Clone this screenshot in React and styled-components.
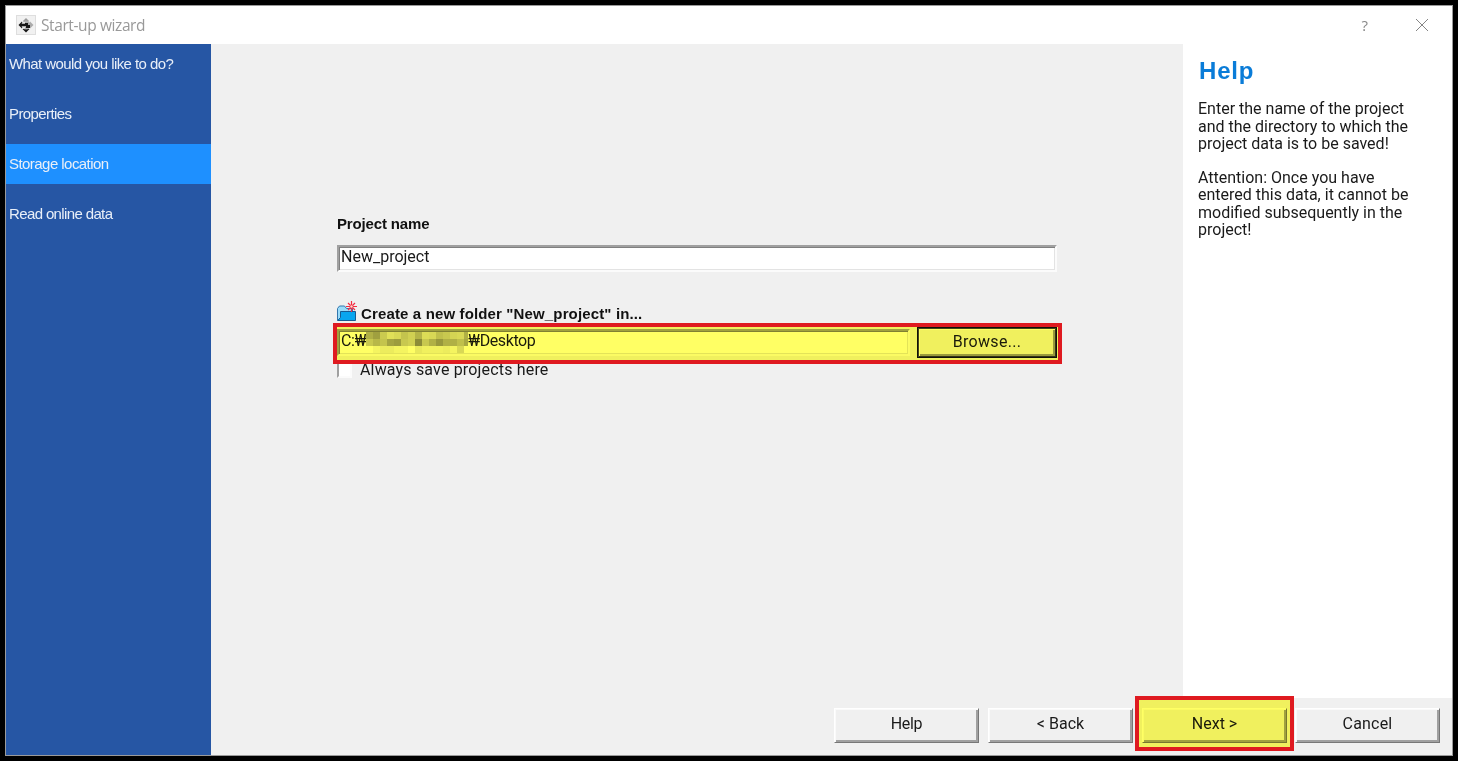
import styled, { createGlobalStyle } from "styled-components";

const GlobalStyle = createGlobalStyle`
  * {
    box-sizing: border-box;
  }

  body {
    margin: 0;
    background: #000;
    overflow: hidden;
  }
`;

const Screen = styled.div`
  height: 761px;
  padding: 5px;
  background: #000;
`;

const Window = styled.div`
  display: flex;
  flex-direction: column;
  width: 1448px;
  height: 751px;
  border: 1px solid #9a9a9a;
  background: #f0f0f0;
  color: #1a1a1a;
  font-family: Roboto, "Liberation Sans", "Noto Sans CJK KR", sans-serif;
  font-size: 16px;
`;

const TitleBar = styled.div`
  display: flex;
  align-items: center;
  height: 38px;
  padding: 0 23px 0 10px;
  background: #fff;

  .window-buttons {
    display: flex;
    align-items: center;
    gap: 47px;
    margin-left: auto;
  }
`;

const Label = styled.span`
  font-size: ${(props) => props.size || "inherit"};
  font-weight: ${(props) => props.weight || 400};
  font-family: ${(props) => props.font || "inherit"};
  letter-spacing: ${(props) => props.spacing || "0"};
  color: ${(props) => props.color || "inherit"};
  line-height: 18px;
  white-space: pre;
`;

const BoldLabel = styled(Label)`
  color: #111;
  font-family: "Liberation Sans", Arial, sans-serif;
  font-size: 15px;
  font-weight: 700;
`;

const Body = styled.div`
  display: flex;
  flex: 1;
`;

const Sidebar = styled.div`
  display: flex;
  flex-direction: column;
  gap: 10px;
  width: 205px;
  background: #2656a4;
`;

const Step = styled.div`
  height: 40px;
  padding-left: 3px;
  background: ${(props) => (props.active ? "#1e90ff" : "transparent")};
  color: #e9eff8;
  font-family: "Liberation Sans", Arial, sans-serif;
  font-size: 15px;
  line-height: 40px;
  letter-spacing: ${(props) => props.spacing};
`;

const Content = styled.div`
  display: flex;
  flex-direction: column;
  flex: 1;
`;

const Panels = styled.div`
  display: flex;
  height: 654px;
`;

const Main = styled.div`
  width: 972px;
  padding: 171px 126px 0;
`;

const NameCaption = styled.div`
  display: flex;
  height: 30px;
`;

const HelpPanel = styled.div`
  flex: 1;
  padding: 13px 0 0 15px;
  background: #fff;
`;

const HelpTitle = styled.h1`
  margin: 0 0 15px 1px;
  color: #0a7cd8;
  font-family: "Liberation Sans", Arial, sans-serif;
  font-size: 24px;
  font-weight: 700;
  line-height: 28px;
  letter-spacing: 0.8px;
`;

const HelpText = styled.p`
  display: flex;
  flex-direction: column;
  margin: 0 0 16px;

  ${Label} {
    line-height: 17.5px;
  }
`;

const Field = styled.div`
  display: flex;
  width: ${(props) => props.width};
  height: 27px;
  padding: 1px 2px 0;
  border: 2px solid;
  border-color: #a0a0a0 #fbfbfb #fbfbfb #a0a0a0;
  background: #fff;
  box-shadow: inset 1px 1px 0 #808080, inset -1px -1px 0 #e3e3e3;
`;

const FolderHeading = styled.div`
  display: flex;
  align-items: flex-end;
  gap: 4px;
  height: 23px;
  margin-top: 27px;

  ${BoldLabel} {
    margin-bottom: -1px;
  }
`;

const PathRow = styled.div`
  position: relative;
  display: flex;
  justify-content: space-between;
  align-items: center;
  height: 31px;
  margin-top: 5px;
`;

const Mosaic = styled.div`
  display: grid;
  grid-template-columns: repeat(14, 7px) 4px;
  grid-auto-rows: 7px;
  width: 102px;
`;

const Tile = styled.i`
  background: ${(props) => props.shade};
`;

const CheckRow = styled.div`
  display: flex;
  align-items: flex-start;
  gap: 8px;
  margin-top: 3px;
`;

const CheckBox = styled.span`
  width: 15px;
  height: 17px;
  border: 2px solid;
  border-color: #a0a0a0 #fbfbfb #fbfbfb #a0a0a0;
  background: #fff;
`;

const Button = styled.button`
  width: ${(props) => props.width || "145px"};
  height: ${(props) => props.height || "35px"};
  padding: 0 0 3px;
  border: 1px solid;
  border-color: #fff #777 #777 #fff;
  border-radius: 0;
  background: #f0f0f0;
  box-shadow: inset 1px 1px 0 #fafafa, inset -2px -2px 0 #a0a0a0;
  color: inherit;
  font: inherit;
  line-height: 18px;
`;

const BrowseButton = styled(Button)`
  padding: 0 0 1px;
  border: 1px solid #111;
  box-shadow: inset 1px 1px 0 #444, inset -1px -1px 0 #333, inset 2px 2px 0 #fff,
    inset -3px -3px 0 #999;
`;

const Footer = styled.div`
  display: flex;
  justify-content: flex-end;
  gap: 9px;
  padding: 10px 12px 0 0;
`;

const NextSlot = styled.div`
  position: relative;
  margin-right: -1px;
`;

// Marker pen: red frame with a yellow tint over what it covers
const Highlight = styled.div`
  position: absolute;
  z-index: 1;
  inset: ${(props) => props.inset};
  border: 4px solid #df1a20;
  pointer-events: none;
`;

const Tint = styled.div`
  position: absolute;
  z-index: 1;
  inset: ${(props) => props.inset};
  background: #ffff64;
  mix-blend-mode: multiply;
  pointer-events: none;
`;

const steps = [
  { name: "What would you like to do?", spacing: "-0.58px" },
  { name: "Properties", spacing: "-0.6px" },
  { name: "Storage location", active: true, spacing: "-0.55px" },
  { name: "Read online data", spacing: "-0.63px" },
];

const helpTexts = [
  [
    "Enter the name of the project",
    "and the directory to which the",
    "project data is to be saved!",
  ],
  [
    "Attention: Once you have",
    "entered this data, it cannot be",
    "modified subsequently in the",
    "project!",
  ],
];

const tiles = [
  "#b0b0b0", "#a0a0a0", "#cacaca", "#e0e0e0", "#d8d8d8", "#c4c4c4", "#d0d0d0", "#b4b4b4", "#dcdcdc", "#d8d8d8", "#c0c0c0", "#c8c8c8", "#d4d4d4", "#d8d8d8", "#b0b0b0",
  "#c8c8c8", "#b8b8b8", "#c4c4c4", "#a4a4a4", "#9c9c9c", "#c8c8c8", "#d0d0d0", "#8c8c8c", "#c8c8c8", "#b0b0b0", "#989898", "#b0b0b0", "#b0b0b0", "#c0c0c0", "#a8a8a8",
  "#fff", "#f4f4f4", "#ececec", "#ececec", "#f4f4f4", "#f4f4f4", "#fff", "#e8e8e8", "#f0f0f0", "#f0f0f0", "#f0f0f0", "#ececec", "#f4f4f4", "#d8d8d8", "#fff",
];

const AppIconSvg = styled.svg`
  margin-right: 5px;
`;

const AppIcon = () => (
  <AppIconSvg width="20" height="20" viewBox="0 0 20 20">
    <rect x="0.5" y="0.5" width="19" height="19" fill="#f1f1f1" stroke="#dedede" />
    <path d="M10 3 13 6H7z" fill="#999" />
    <path d="M17.5 10 14 13.5v-7z" fill="#aaa" />
    <path d="M2.5 10 6 6.5v7z" fill="#161616" />
    <path d="M10 17.5 6.5 14h7z" fill="#161616" />
    <circle cx="10" cy="10" r="4.5" fill="#b0b0b0" />
    <path d="M5 9h4V8h3v2h2v3h-4v-2H5z" fill="#171717" />
    <path d="M7 7h2v1H7zM7 12h2v1.5H7z" fill="#e5e5e5" />
  </AppIconSvg>
);

const FolderIcon = () => (
  <svg width="20" height="21" viewBox="0 0 20 21">
    <path d="M0.5 19.5V7.5L2.5 5h5l2 2.5h6v3" fill="#9bdcfa" stroke="#3276ad" />
    <path d="M3.5 10.5h15v9H0.7l2.8-3z" fill="#08a5ee" stroke="#185a91" />
    <path d="M14.5 0v11M9 5.5h11M11 2l7 7M18 2l-7 7" stroke="#f32c42" strokeWidth="1.2" />
    <circle cx="14.5" cy="5.5" r="1.2" fill="#ffd9cc" />
  </svg>
);

const App = () => {
  return (
    <>
      <GlobalStyle />
      <Screen>
        <Window>
          <TitleBar>
            <AppIcon />
            <Label size="15.5px" color="#999" font='"Open Sans", sans-serif' spacing="-0.4px">
              Start-up wizard
            </Label>
            <div className="window-buttons">
              <Label size="15px" color="#888" font='"Open Sans", sans-serif'>?</Label>
              <svg width="14" height="14" viewBox="0 0 14 14">
                <path d="M1 1l12 12M13 1 1 13" stroke="#858585" />
              </svg>
            </div>
          </TitleBar>
          <Body>
            <Sidebar>
              {steps.map((step, key) => (
                <Step key={key} active={step.active} spacing={step.spacing}>
                  {step.name}
                </Step>
              ))}
            </Sidebar>
            <Content>
              <Panels>
                <Main>
                  <NameCaption>
                    <BoldLabel spacing="-0.15px">Project name</BoldLabel>
                  </NameCaption>
                  <Field width="720px">
                    <Label>New_project</Label>
                  </Field>
                  <FolderHeading>
                    <FolderIcon />
                    <BoldLabel spacing="0.14px">
                      Create a new folder "New_project" in...
                    </BoldLabel>
                  </FolderHeading>
                  <PathRow>
                    <Field width="573px">
                      <Label spacing="-0.3px">C:₩</Label>
                      <Mosaic>
                        {tiles.map((shade, key) => (
                          <Tile key={key} shade={shade} />
                        ))}
                      </Mosaic>
                      <Label spacing="-0.4px">₩Desktop</Label>
                    </Field>
                    <BrowseButton width="140px" height="31px">
                      <Label spacing="0.3px">Browse...</Label>
                    </BrowseButton>
                    <Tint inset="0 -1px -2px 0" />
                    <Highlight inset="-4px -5px -6px -4px" />
                  </PathRow>
                  <CheckRow>
                    <CheckBox />
                    <Label spacing="0.17px">Always save projects here</Label>
                  </CheckRow>
                </Main>
                <HelpPanel>
                  <HelpTitle>Help</HelpTitle>
                  {helpTexts.map((lines, key) => (
                    <HelpText key={key}>
                      {lines.map((line) => (
                        <Label key={line}>{line}</Label>
                      ))}
                    </HelpText>
                  ))}
                </HelpPanel>
              </Panels>
              <Footer>
                <Button><Label spacing="-0.3px">Help</Label></Button>
                <Button><Label>&lt; Back</Label></Button>
                <NextSlot>
                  <Button><Label>Next &gt;</Label></Button>
                  <Tint inset="-8px -3px -4px -3px" />
                  <Highlight inset="-12px -7px -8px -7px" />
                </NextSlot>
                <Button><Label spacing="0.2px">Cancel</Label></Button>
              </Footer>
            </Content>
          </Body>
        </Window>
      </Screen>
    </>
  );
};

export default App;
